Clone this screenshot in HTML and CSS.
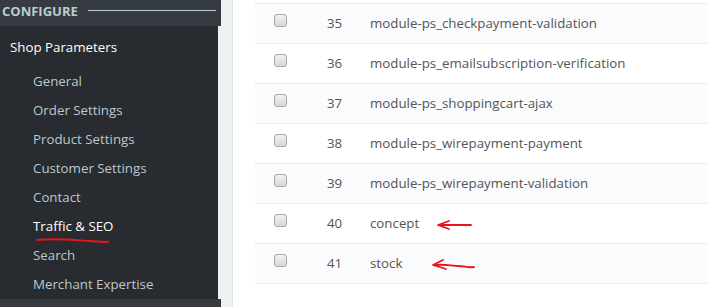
FILE: index.html
```html
<!DOCTYPE html>
<html lang="en">
<head>
  <meta charset="UTF-8">
  <title>Traffic &amp; SEO</title>
  <link rel="stylesheet" href="styles.css">
</head>
<body>
  <div class="sidebar">
    <div class="section-title">
      <span>Configure</span>
      <span class="rule"></span>
    </div>
    <div class="menu">
      <div class="menu-head">Shop Parameters</div>
      <ul class="submenu">
        <li>General</li>
        <li>Order Settings</li>
        <li>Product Settings</li>
        <li>Customer Settings</li>
        <li>Contact</li>
        <li class="active">Traffic &amp; SEO</li>
        <li>Search</li>
        <li>Merchant Expertise</li>
      </ul>
    </div>
    <div class="section-foot"></div>
  </div>

  <div class="main">
    <div class="panel">
      <table class="list">
        <tr class="odd"><td class="check"><input type="checkbox"></td><td class="id">35</td><td>module-ps_checkpayment-validation</td></tr>
        <tr><td class="check"><input type="checkbox"></td><td class="id">36</td><td>module-ps_emailsubscription-verification</td></tr>
        <tr class="odd"><td class="check"><input type="checkbox"></td><td class="id">37</td><td>module-ps_shoppingcart-ajax</td></tr>
        <tr><td class="check"><input type="checkbox"></td><td class="id">38</td><td>module-ps_wirepayment-payment</td></tr>
        <tr class="odd"><td class="check"><input type="checkbox"></td><td class="id">39</td><td>module-ps_wirepayment-validation</td></tr>
        <tr><td class="check"><input type="checkbox"></td><td class="id">40</td><td>concept</td></tr>
        <tr class="odd"><td class="check"><input type="checkbox"></td><td class="id">41</td><td>stock</td></tr>
      </table>
    </div>
  </div>

  <!-- hand drawn marks on top of the screenshot -->
  <svg class="marks" width="708" height="307" viewBox="0 0 708 307">
    <path d="M37 240 C 55 238, 75 240, 90 241 S 104 242, 108 242" />
    <path d="M449 221 L 438 225 L 449 229" />
    <path d="M440 225 L 471 225" />
    <path d="M443 260 L 433 265 L 446 269" />
    <path d="M436 265 C 445 264, 452 266, 458 266 S 468 268, 474 267" />
  </svg>
</body>
</html>
```

FILE: styles.css
```css
body {
  margin: 0;
  font-family: "Open Sans", "Noto Sans", sans-serif;
  font-size: 13.3px;
  background-color: #eff1f2;
  display: flex;
  height: 307px;
  overflow: hidden;
}

.sidebar {
  width: 221px;
  flex-shrink: 0;
  display: flex;
  flex-direction: column;
}

.section-title {
  height: 30px;
  background-color: #363a41;
  display: flex;
  align-items: flex-start;
  padding: 2px 5px 0 2px;
  box-sizing: border-box;
  color: #bbcdd2;
  font-weight: bold;
  text-transform: uppercase;
  font-size: 13px;
  line-height: 18px;
}

.section-title .rule {
  flex: 1;
  height: 1px;
  margin: 8px 0 0 10px;
  background-color: #bbcdd2;
}

.menu {
  flex: 1;
  width: 218px;
  background-color: #282b30;
  padding-top: 11px;
}

.menu-head {
  color: #fff;
  padding-left: 10px;
  line-height: 20px;
}

.submenu {
  list-style: none;
  margin: 0;
  padding: 10px 0 0 33px;
}

.submenu li {
  line-height: 29px;
  color: #bcc8cc;
}

.submenu li.active {
  color: #fff;
}

.section-foot {
  height: 9px;
  background-color: #363a41;
}

.main {
  flex: 1;
  padding-left: 11px;
  display: flex;
}

.panel {
  flex: 1;
  background-color: #fff;
  border-left: 1px solid #dbe6e9;
  padding: 3px 0 0 22px;
}

.list {
  width: 100%;
  border-collapse: collapse;
  color: #555;
}

.list tr {
  height: 40px;
  border-top: 1px solid #eaedef;
  border-bottom: 1px solid #eaedef;
}

.list tr.odd {
  background-color: #fafbfc;
}

.list td {
  padding: 0 0 2px 0;
  vertical-align: middle;
}

.list td.check {
  width: 53px;
  padding-left: 19px;
}

.list td.id {
  width: 43px;
}

.list input {
  appearance: none;
  display: block;
  width: 13px;
  height: 13px;
  margin: -4px 0 0 0;
  border: 1px solid #a8a8a8;
  border-radius: 3px;
  background: linear-gradient(#f2f2f2, #d8d8d8);
  box-sizing: border-box;
}

.marks {
  position: absolute;
  top: 0;
  left: 0;
  pointer-events: none;
}

.marks path {
  fill: none;
  stroke: #e8141b;
  stroke-width: 1.8;
  stroke-linecap: round;
  stroke-linejoin: round;
}
```
